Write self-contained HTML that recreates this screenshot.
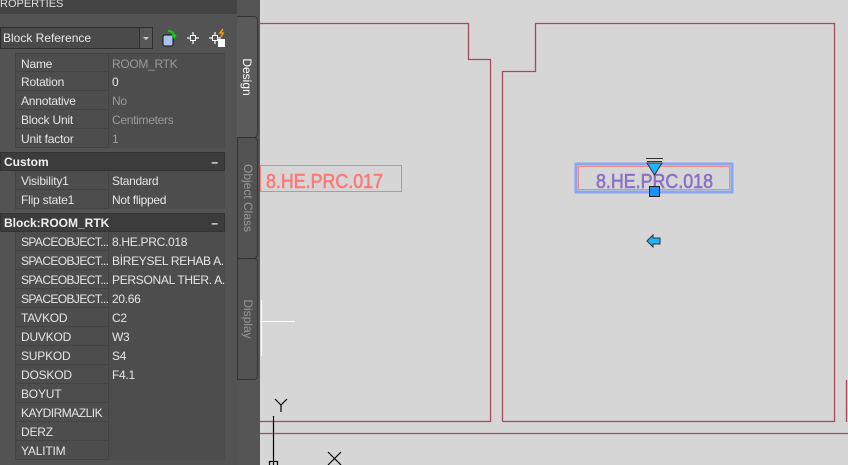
<!DOCTYPE html>
<html><head><style>
*{margin:0;padding:0;box-sizing:border-box}
body{width:848px;height:465px;overflow:hidden;background:#d6d6d6;font-family:"Liberation Sans",sans-serif;position:relative}
#panel{position:absolute;left:0;top:0;width:260px;height:465px;background:#535353}
#title{position:absolute;left:0;top:0;width:237px;height:14px;background:#444;color:#ddd;font-size:11px;line-height:8px;overflow:hidden}
.combo{position:absolute;left:0;top:27px;width:153px;height:22px;background:#4a4a4a;border:1px solid #2f2f2f;color:#e8e8e8;font-size:12px;line-height:20px;padding-left:2px}
.combo .btn{position:absolute;right:0;top:0;width:13px;height:20px;border-left:1px solid #2f2f2f;background:#575757}
.combo .btn:after{content:"";position:absolute;left:3px;top:9px;border:3px solid transparent;border-top:3px solid #ccc}
.row{position:absolute;left:15px;width:210px;height:19px;border-bottom:1px solid #434343;border-left:1px solid #434343;border-right:1px solid #434343;background:#4d4d4d;font-size:12px;color:#e6e6e6;line-height:20px;white-space:nowrap}
.row span{position:absolute;left:5px;top:0;letter-spacing:-0.2px}
.row i{font-style:normal;position:absolute;left:92px;top:0;border-left:1px solid #434343;padding-left:3px;height:19px;background:#4d4d4d;width:117px;overflow:hidden;letter-spacing:-0.3px}
.row .g{color:#9a9a9a}
.hdr{position:absolute;left:0;width:225px;height:19px;background:#3c3c3c;border:1px solid #333;color:#f0f0f0;font-weight:bold;font-size:12px;line-height:18px;padding-left:3px}
.hdr b{position:absolute;right:6px;top:0}
.tab{position:absolute;left:237px;width:21px;border:1px solid #333;border-radius:0 4px 4px 0;background:#525252}
.tab div{position:absolute;left:50%;top:50%;transform:translate(-50%,-50%) rotate(90deg);white-space:nowrap;font-size:12px;color:#999}
</style></head><body>
<svg style="position:absolute;left:0;top:0" width="848" height="465">
<g stroke="#a44a5c" stroke-width="1.3" fill="none">
<polyline points="260,23.5 468.5,23.5 468.5,59.5 490.5,59.5 490.5,421.5 260,421.5"/>
<polyline points="502.5,421.5 502.5,71.5 535.5,71.5 535.5,23.5 834.5,23.5 834.5,421.5 502.5,421.5"/>
<line x1="260" y1="433.5" x2="848" y2="433.5"/>
<line x1="846.5" y1="380" x2="846.5" y2="422"/>
</g>
<rect x="260.5" y="165.5" width="141" height="26" fill="none" stroke="#f08080" stroke-width="1"/>
<text x="266" y="188" font-family="Liberation Sans" font-size="20" fill="#ff7878" stroke="#ff7878" stroke-width="0.6" textLength="117" lengthAdjust="spacingAndGlyphs">8.HE.PRC.017</text>
<rect x="576" y="164" width="156" height="28" fill="none" stroke="#8aa6f0" stroke-width="3"/>
<rect x="578.5" y="166.5" width="151" height="23" fill="none" stroke="#f08888" stroke-width="1"/>
<text x="596" y="188" font-family="Liberation Sans" font-size="20" fill="#8a70c8" stroke="#8a70c8" stroke-width="0.6" textLength="117" lengthAdjust="spacingAndGlyphs">8.HE.PRC.018</text>
<line x1="646" y1="158.5" x2="663" y2="158.5" stroke="#333" stroke-width="1"/>
<line x1="647" y1="161.5" x2="662" y2="161.5" stroke="#333" stroke-width="1"/>
<polygon points="647,163 662,163 654.5,175" fill="#1fb4ff" stroke="#333" stroke-width="1"/>
<rect x="649.5" y="186.5" width="10" height="10" fill="#1e90ff" stroke="#222"/>
<polygon points="647,241 653,235 653,238 660,238 660,244 653,244 653,247" fill="#1fb4ff" stroke="#333" stroke-width="1"/>
<line x1="260" y1="321.5" x2="295" y2="321.5" stroke="#fff"/>
<line x1="261.5" y1="300" x2="261.5" y2="356" stroke="#fff"/>
<g stroke="#000" stroke-width="1.2" fill="none">
<line x1="273.5" y1="416" x2="273.5" y2="465"/>
<rect x="269.5" y="461.5" width="8" height="6"/>
<polyline points="275,399 281,405 287,399"/><line x1="281" y1="405" x2="281" y2="412"/>
<line x1="328" y1="452" x2="341" y2="465"/><line x1="341" y1="452" x2="328" y2="465"/>
</g>
</svg>
<div id="panel">
<div id="title">ROPERTIES</div>
<div style="position:absolute;left:237px;top:0;width:23px;height:465px;background:#555"></div>
<div class="combo">Block Reference<div class="btn"></div></div>
<svg style="position:absolute;left:160px;top:27px" width="75" height="22">
<rect x="3" y="8" width="10" height="11" rx="2" fill="#a8c4ee" stroke="#111"/>
<path d="M8 4 q6 0 6 6 l-2 -2 m2 2 l2 -2" stroke="#1c1" stroke-width="2" fill="none"/>
<g stroke="#fff" stroke-width="1.2"><line x1="27" y1="11" x2="39" y2="11"/><line x1="33" y1="5" x2="33" y2="17"/></g>
<rect x="30.5" y="8.5" width="5" height="5" fill="#535353" stroke="#fff"/>
<g stroke="#fff" stroke-width="1.2"><line x1="49" y1="11" x2="61" y2="11"/><line x1="55" y1="5" x2="55" y2="17"/></g>
<rect x="52.5" y="8.5" width="5" height="5" fill="#535353" stroke="#fff"/>
<path d="M63 2 l-3 4 h3 l-2 4" stroke="#f90" stroke-width="1.5" fill="none"/>
<rect x="58" y="12" width="7" height="8" fill="#fff"/>
</svg>
<div class="row" style="top:53px;border-top:1px solid #434343"><span>Name</span><i class="g">ROOM_RTK</i></div>
<div class="row" style="top:72px"><span>Rotation</span><i>0</i></div>
<div class="row" style="top:91px"><span>Annotative</span><i class="g">No</i></div>
<div class="row" style="top:110px"><span>Block Unit</span><i class="g">Centimeters</i></div>
<div class="row" style="top:129px"><span>Unit factor</span><i class="g">1</i></div>
<div class="hdr" style="top:152px">Custom<b>–</b></div>
<div class="row" style="top:171px"><span>Visibility1</span><i>Standard</i></div>
<div class="row" style="top:190px"><span>Flip state1</span><i>Not flipped</i></div>
<div class="hdr" style="top:213px">Block:ROOM_RTK<b>–</b></div>
<div class="row" style="top:232px"><span style="letter-spacing:-0.6px">SPACEOBJECT...</span><i>8.HE.PRC.018</i></div>
<div class="row" style="top:251px"><span style="letter-spacing:-0.6px">SPACEOBJECT...</span><i>BİREYSEL REHAB A.</i></div>
<div class="row" style="top:270px"><span style="letter-spacing:-0.6px">SPACEOBJECT...</span><i>PERSONAL THER. A.</i></div>
<div class="row" style="top:289px"><span style="letter-spacing:-0.6px">SPACEOBJECT...</span><i>20.66</i></div>
<div class="row" style="top:308px"><span>TAVKOD</span><i>C2</i></div>
<div class="row" style="top:327px"><span>DUVKOD</span><i>W3</i></div>
<div class="row" style="top:346px"><span>SUPKOD</span><i>S4</i></div>
<div class="row" style="top:365px"><span>DOSKOD</span><i>F4.1</i></div>
<div class="row" style="top:384px"><span>BOYUT</span><i></i></div>
<div class="row" style="top:403px"><span style="letter-spacing:-0.5px">KAYDIRMAZLIK</span><i></i></div>
<div class="row" style="top:422px"><span>DERZ</span><i></i></div>
<div class="row" style="top:441px"><span>YALITIM</span><i></i></div>
<div class="tab" style="top:16px;height:122px;background:#5a5a5a;border-left:none"><div style="color:#fff">Design</div></div>
<div class="tab" style="top:137px;height:122px"><div>Object Class</div></div>
<div class="tab" style="top:258px;height:122px"><div>Display</div></div>
</div>
</body></html>
